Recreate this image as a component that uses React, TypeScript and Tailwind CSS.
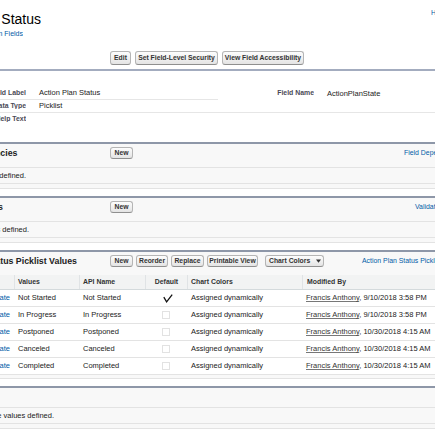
import React from "react";

// Salesforce Classic – custom field detail page (cropped view)

type BoxProps = { className?: string; children?: React.ReactNode };

function Btn({ className = "", children }: BoxProps) {
  return (
    <div
      className={`flex shrink-0 items-center justify-center whitespace-nowrap rounded-[3px] border border-[#b5b5b5] border-b-[#8f8f8f] bg-linear-to-b from-[#fdfdfd] to-[#e4e4e4] text-[6.8px] font-bold leading-none text-[#333] ${className}`}
    >
      {children}
    </div>
  );
}

// right-aligned text that gets cut on its left side
function Clip({ className = "", children }: BoxProps) {
  return (
    <div className={`flex shrink-0 justify-end overflow-hidden whitespace-nowrap ${className}`}>
      {children}
    </div>
  );
}

const rows = [
  { value: "Not Started", def: true, when: "9/10/2018 3:58 PM" },
  { value: "In Progress", def: false, when: "9/10/2018 3:58 PM" },
  { value: "Postponed", def: false, when: "10/30/2018 4:15 AM" },
  { value: "Canceled", def: false, when: "10/30/2018 4:15 AM" },
  { value: "Completed", def: false, when: "10/30/2018 4:15 AM" },
];

export default function App() {
  return (
    <div className="h-screen w-full overflow-hidden bg-white font-['Liberation_Sans',Arial,sans-serif] text-[7.5px] text-[#222]">
      {/* title */}
      <div className="flex h-[27px] items-start">
        <Clip className="mt-[11px] w-[41px] text-[14px] leading-[16px] text-black">Action Plan Status</Clip>
        <div className="ml-[390px] mt-[8px] shrink-0 whitespace-nowrap text-[7px] leading-[9px] text-[#015ba7]">
          Help for this Page
        </div>
      </div>
      <Clip className="mt-[2px] h-[9px] w-[23px] text-[7px] leading-[9px] text-[#015ba7]">
        « Back to Action Plan Fields
      </Clip>

      {/* buttons */}
      <div className="mt-[13px] flex h-[14px] gap-[4px] pl-[110px]">
        <Btn className="w-[21px]">Edit</Btn>
        <Btn className="w-[83px]">Set Field-Level Security</Btn>
        <Btn className="w-[82px]">View Field Accessibility</Btn>
      </div>
      <div className="mt-[4px] h-[2px] bg-[#a3acbf]" />

      {/* field information */}
      <div className="pt-[16px] leading-none">
        <div className="flex h-[13px]">
          <div className="flex w-[218px] shrink-0 items-center border-b border-[#e6e6e6]">
            <Clip className="w-[26px] text-[6.9px] font-bold text-[#4a4a56]">Field Label</Clip>
            <span className="ml-[13px] whitespace-nowrap">Action Plan Status</span>
          </div>
          <div className="flex shrink-0 items-center">
            <Clip className="w-[96px] text-[6.9px] font-bold text-[#4a4a56]">Field Name</Clip>
            <span className="ml-[13px] whitespace-nowrap">ActionPlanState</span>
          </div>
        </div>
        <div className="flex h-[13px] items-center border-b border-[#e6e6e6]">
          <Clip className="w-[26px] text-[6.9px] font-bold text-[#4a4a56]">Data Type</Clip>
          <span className="ml-[13px]">Picklist</span>
        </div>
        <div className="flex h-[12px] items-center">
          <Clip className="w-[26px] text-[6.9px] font-bold text-[#4a4a56]">Help Text</Clip>
        </div>
      </div>

      {/* field dependencies */}
      <div className="mt-[17px] border-t-2 border-b border-t-[#8e97a8] border-b-[#e3e3e3] bg-[#f8f8f8] pb-[4px]">
        <div className="flex h-[24px] items-start border-b border-[#e3e3e3] pt-[3px]">
          <div className="flex h-[12px] w-[110px] shrink-0 items-center">
            <Clip className="w-[17.5px] text-[8.8px] font-bold leading-[11px]">Field Dependencies</Clip>
          </div>
          <div className="flex h-[12px] w-[294px] shrink-0">
            <Btn className="w-[23px]">New</Btn>
          </div>
          <div className="flex h-[12px] shrink-0 items-center whitespace-nowrap text-[6.9px] text-[#015ba7]">
            Field Dependencies Help
          </div>
        </div>
        <div className="flex h-[16px] items-center border-b border-[#e3e3e3]">
          <Clip className="w-[26px]">No dependencies defined.</Clip>
        </div>
      </div>

      {/* validation rules */}
      <div className="mt-[7px] border-t-2 border-b border-t-[#8e97a8] border-b-[#e3e3e3] bg-[#f8f8f8] pb-[4px]">
        <div className="flex h-[24px] items-start border-b border-[#e3e3e3] pt-[3px]">
          <div className="flex h-[12px] w-[110px] shrink-0 items-center">
            <Clip className="w-[3px] text-[8.8px] font-bold leading-[11px]">Validation Rules</Clip>
          </div>
          <div className="flex h-[12px] w-[305px] shrink-0">
            <Btn className="w-[23px]">New</Btn>
          </div>
          <div className="flex h-[12px] shrink-0 items-center whitespace-nowrap text-[6.9px] text-[#015ba7]">
            Validation Rules Help
          </div>
        </div>
        <div className="flex h-[16px] items-center border-b border-[#e3e3e3]">
          <Clip className="w-[29px]">No validation rules defined.</Clip>
        </div>
      </div>

      {/* picklist values */}
      <div className="mt-[7px] border-t-2 border-b border-t-[#8e97a8] border-b-[#e3e3e3] bg-[#f8f8f8] pb-[3px]">
        <div className="flex h-[23px] items-start pt-[3px]">
          <div className="flex h-[12px] w-[110px] shrink-0 items-center">
            <Clip className="w-[77px] text-[8.8px] font-bold leading-[11px]">
              Action Plan Status Picklist Values
            </Clip>
          </div>
          <div className="flex h-[12px] shrink-0 gap-[3px]">
            <Btn className="w-[23px]">New</Btn>
            <Btn className="w-[32px]">Reorder</Btn>
            <Btn className="w-[33px]">Replace</Btn>
            <Btn className="w-[51px]">Printable View</Btn>
            <Btn className="ml-[4px] w-[59px] justify-start! pl-[3px]">
              Chart Colors
              <svg width="5" height="4" viewBox="0 0 5 4" className="ml-[6px]">
                <path d="M0 0.5 H5 L2.5 3.8 Z" fill="#333" />
              </svg>
            </Btn>
          </div>
          <div className="ml-[38px] flex h-[12px] shrink-0 items-center whitespace-nowrap text-[6.9px] text-[#015ba7]">
            Action Plan Status Picklist Values Help
          </div>
        </div>

        <div className="flex h-[15px] border-b border-[#d4dadc] bg-[#f2f3f3] text-[6.9px] font-bold text-[#333]">
          <div className="w-[14px] shrink-0" />
          <div className="flex w-[65px] shrink-0 items-center border-l border-[#e0e3e5] pl-[3px]">Values</div>
          <div className="flex w-[66px] shrink-0 items-center border-l border-[#e0e3e5] pl-[3px]">API Name</div>
          <div className="flex w-[42px] shrink-0 items-center justify-center border-l border-[#e0e3e5]">Default</div>
          <div className="flex w-[115px] shrink-0 items-center border-l border-[#e0e3e5] pl-[3px]">Chart Colors</div>
          <div className="flex flex-1 items-center border-l border-[#e0e3e5] pl-[4px]">Modified By</div>
        </div>
        {rows.map((r) => (
          <div key={r.value} className="flex h-[17px] items-center border-b border-[#e3e3e3] bg-white leading-none text-[#222]">
            <Clip className="w-[14px] pr-[4px] text-[#015ba7]">Edit | Del | Deactivate</Clip>
            <div className="w-[65px] shrink-0 pl-[4px] text-[#222]">{r.value}</div>
            <div className="w-[66px] shrink-0 pl-[4px] text-[#222]">{r.value}</div>
            <div className="flex w-[42px] shrink-0 justify-center">
              {r.def ? (
                <svg width="10" height="9" viewBox="0 0 10 9" className="ml-[3px]">
                  <path d="M0.8 3.2 L3.6 7.8 L9.2 0.6" fill="none" stroke="#111" strokeWidth="1.3" />
                </svg>
              ) : (
                <div className="h-[8px] w-[8px] border border-[#e2e2e2]" />
              )}
            </div>
            <div className="w-[115px] shrink-0 pl-[4px] text-[#222]">Assigned dynamically</div>
            <div className="shrink-0 whitespace-nowrap pl-[4px] text-[#222]">
              <span className="text-[#333] underline decoration-[#777]">Francis Anthony</span>, {r.when}
            </div>
          </div>
        ))}
      </div>

      {/* inactive values */}
      <div className="mt-[7px] border-t-2 border-b border-t-[#8e97a8] border-b-[#e3e3e3] bg-[#f8f8f8] pb-[4px]">
        <div className="flex h-[20px] items-center border-b border-[#e3e3e3]">
          <Clip className="w-[0px] text-[8.8px] font-bold">Inactive Values</Clip>
        </div>
        <div className="flex h-[16px] items-center border-b border-[#e3e3e3]">
          <Clip className="w-[54px]">No inactive values defined.</Clip>
        </div>
      </div>
    </div>
  );
}
